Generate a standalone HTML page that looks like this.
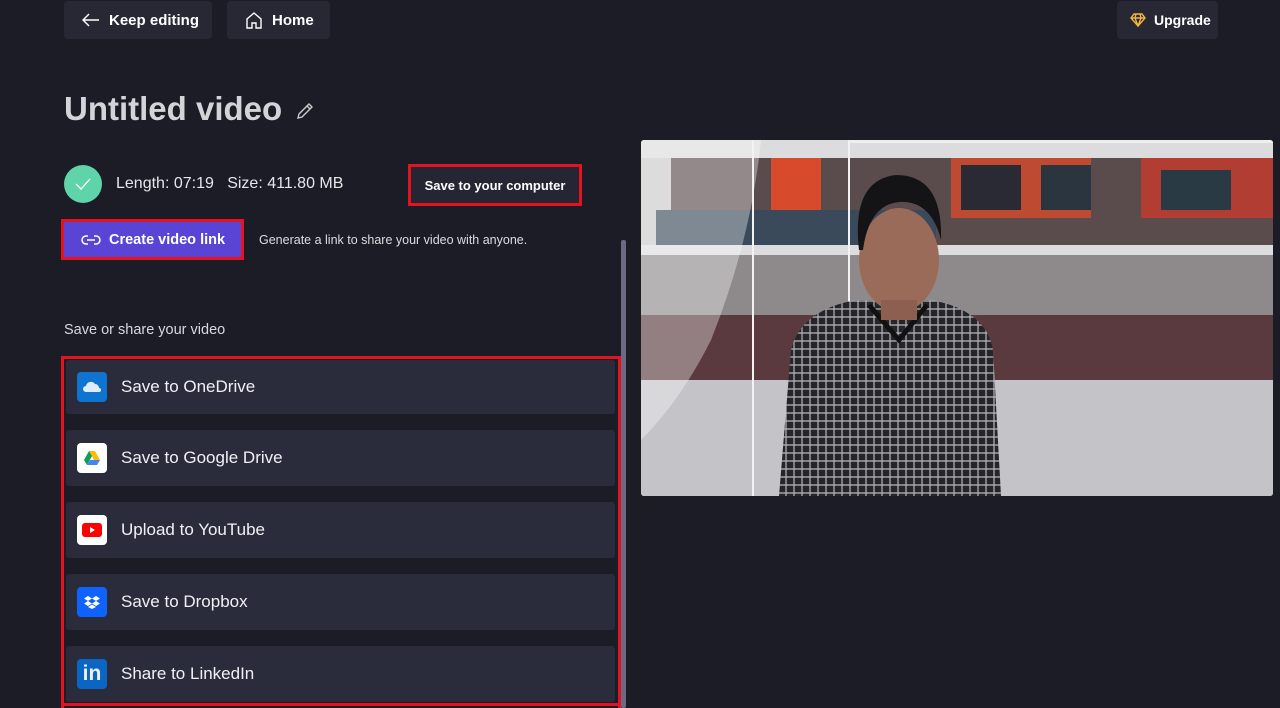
<!DOCTYPE html>
<html><head><meta charset="utf-8"><style>
*{box-sizing:border-box;margin:0;padding:0}
body{width:1280px;height:708px;overflow:hidden;background:#1c1c26;font-family:"Liberation Sans",sans-serif;color:#fff;position:relative}
.a{position:absolute}
.btn{background:#272834;border-radius:4px;font-weight:bold;font-size:15px;display:flex;align-items:center}
.item{position:absolute;left:66px;width:549px;height:54px;background:#2b2c3b;border-radius:3px;display:flex;align-items:center;font-size:17px;color:#f0f0f4}
.ic{width:30px;height:30px;border-radius:4px;margin-left:11px;margin-right:14px;display:flex;align-items:center;justify-content:center}
</style></head><body>
<div class="a btn" style="left:64px;top:1px;width:148px;height:38px"><svg style="margin-left:18px" width="18" height="14" viewBox="0 0 18 14"><path d="M7 1L1 7l6 6M1 7h16" stroke="#fff" stroke-width="1.5" fill="none"/></svg><span style="margin-left:9px">Keep editing</span></div>
<div class="a btn" style="left:227px;top:1px;width:103px;height:38px"><svg style="margin-left:18px" width="18" height="18" viewBox="0 0 18 18"><path d="M2 8L9 2l7 6v9h-5v-5H7v5H2z" stroke="#fff" stroke-width="1.4" fill="none"/></svg><span style="margin-left:9px">Home</span></div>
<div class="a btn" style="left:1117px;top:1px;width:101px;height:38px;font-size:14px"><svg style="margin-left:13px" width="16" height="14" viewBox="0 0 16 14"><path d="M4 1h8l3 4-7 8-7-8zM1 5h14M6 1L5 5l3 8 3-8-1-4" stroke="#f4b73e" stroke-width="1.4" fill="none"/></svg><span style="margin-left:8px">Upgrade</span></div>
<div class="a" style="left:64px;top:90px;font-size:33px;font-weight:bold;color:#d4d4d8">Untitled video</div>
<svg class="a" style="left:295px;top:101px" width="20" height="20" viewBox="0 0 20 20"><path d="M3 17l1-4L14 3l3 3L7 16zM12 5l3 3" stroke="#ccc" stroke-width="1.4" fill="none"/></svg>
<div class="a" style="left:64px;top:165px;width:38px;height:38px;border-radius:50%;background:#5fd3a9"></div>
<svg class="a" style="left:74px;top:176px" width="18" height="16" viewBox="0 0 18 16"><path d="M2 8l5 5L16 3" stroke="#fff" stroke-width="1.3" fill="none"/></svg>
<div class="a" style="left:116px;top:175px;font-size:16px;color:#e6e6ea">Length: 07:19&nbsp;&nbsp;&nbsp;Size: 411.80 MB</div>
<div class="a" style="left:408px;top:164px;width:174px;height:42px;border:3px solid #e3141f;background:#252633;font-size:13px;font-weight:bold;display:flex;align-items:center;justify-content:center">Save to your computer</div>
<div class="a" style="left:61px;top:219px;width:183px;height:41px;border:3px solid #e3141f;background:#5a44d6;font-size:14.5px;font-weight:bold;display:flex;align-items:center"><svg style="margin-left:17px" width="20" height="12" viewBox="0 0 20 12"><path d="M7 2H5a4 4 0 0 0 0 8h2M13 2h2a4 4 0 0 1 0 8h-2M6 6h8" stroke="#fff" stroke-width="1.5" fill="none"/></svg><span style="margin-left:8px">Create video link</span></div>
<div class="a" style="left:259px;top:233px;font-size:12.5px;color:#dcdce0">Generate a link to share your video with anyone.</div>
<div class="a" style="left:64px;top:322px;font-size:14.5px;color:#d8d8de">Save or share your video</div>
<div class="a" style="left:621px;top:240px;width:5px;height:468px;background:#6a6a86;border-radius:2px"></div>
<div class="a" style="left:61px;top:356px;width:560px;height:352px;border:3px solid #e3141f;border-bottom:none"></div>
<div class="a" style="left:61px;top:703px;width:560px;height:3px;background:#e3141f"></div>
<div class="item" style="top:360px"><div class="ic" style="background:#0f74d0"><svg width="20" height="12" viewBox="0 0 20 12"><path d="M4 11a3 3 0 0 1 0-6 5 5 0 0 1 9-2 4 4 0 0 1 4 4 2 2 0 0 1 0 4z" fill="#e0ecfa"/></svg></div>Save to OneDrive</div>
<div class="item" style="top:430px;height:56px"><div class="ic" style="background:#fff"><svg width="18" height="16" viewBox="0 0 18 16"><path d="M6 1h6l5 9h-6z" fill="#fbbc04"/><path d="M6 1l3 5-5 9-3-5z" fill="#0f9d58"/><path d="M4 15l3-5h10l-3 5z" fill="#4285f4"/></svg></div>Save to Google Drive</div>
<div class="item" style="top:502px;height:56px"><div class="ic" style="background:#fff"><svg width="20" height="14" viewBox="0 0 20 14"><rect width="20" height="14" rx="3" fill="#f00"/><path d="M8 4l5 3-5 3z" fill="#fff"/></svg></div>Upload to YouTube</div>
<div class="item" style="top:574px;height:56px"><div class="ic" style="background:#0f62fe"><svg width="16" height="14" viewBox="0 0 16 14"><path d="M4 1l4 2.5-4 2.5-4-2.5zM12 1l4 2.5-4 2.5-4-2.5zM4 6l4 2.5-4 2.5-4-2.5zM12 6l4 2.5-4 2.5-4-2.5zM8 9.5l4 2.5-4 2-4-2z" fill="#fff"/></svg></div>Save to Dropbox</div>
<div class="item" style="top:646px;height:56px"><div class="ic" style="background:#0a66c2;font-weight:bold;font-size:21px;font-family:'Liberation Sans',sans-serif">in</div>Share to LinkedIn</div>
<svg class="a" style="left:641px;top:140px;border-radius:3px" width="632" height="356" viewBox="0 0 632 356">
<defs><pattern id="chk" width="8" height="8" patternUnits="userSpaceOnUse"><rect width="8" height="8" fill="#26252a"/><path d="M0 1h8M1 0v8" stroke="#b8b8bc" stroke-width="1.2"/></pattern></defs>
<rect width="632" height="356" fill="#c9c9cb"/>
<rect y="0" width="632" height="18" fill="#dcdcde"/>
<rect x="30" y="18" width="602" height="90" fill="#5a4b4c"/>
<rect x="130" y="18" width="50" height="60" fill="#d84a2c"/>
<rect x="310" y="18" width="140" height="60" fill="#d84a2c" opacity=".8"/>
<rect x="500" y="18" width="132" height="60" fill="#c83a2c" opacity=".8"/>
<rect x="320" y="25" width="60" height="45" fill="#2a2a35"/>
<rect x="400" y="25" width="50" height="45" fill="#2a3540"/>
<rect x="520" y="30" width="70" height="40" fill="#2a3a45"/>
<rect x="15" y="70" width="280" height="45" fill="#3a4a5a"/>
<rect x="0" y="105" width="632" height="10" fill="#dddde0"/>
<rect x="0" y="115" width="632" height="70" fill="#8e8a8c"/>
<rect x="0" y="175" width="632" height="65" fill="#5a3a3e"/>
<rect x="0" y="240" width="632" height="116" fill="#c4c4c8"/>
<path d="M0 300 Q40 260 70 200 Q110 100 120 0 L0 0z" fill="#ffffff" opacity=".35"/>
<rect x="111" y="0" width="2" height="356" fill="#f2f2f2"/>
<rect x="207" y="0" width="2" height="175" fill="#f2f2f2"/>
<rect x="208" y="0" width="424" height="3" fill="#eee"/>
<path d="M138 356 L150 210 Q160 170 215 160 L290 160 Q345 170 352 210 L360 356z" fill="url(#chk)"/>
<path d="M228 165 L258 200 L286 165" stroke="#111" stroke-width="5" fill="none"/>
<ellipse cx="258" cy="120" rx="40" ry="52" fill="#9b6b5a"/>
<path d="M218 110 Q210 40 255 35 Q302 35 300 100 Q290 60 258 62 Q228 65 222 110z" fill="#141416"/>
<rect x="240" y="160" width="36" height="20" fill="#8d5f50"/>
</svg>
</body></html>
